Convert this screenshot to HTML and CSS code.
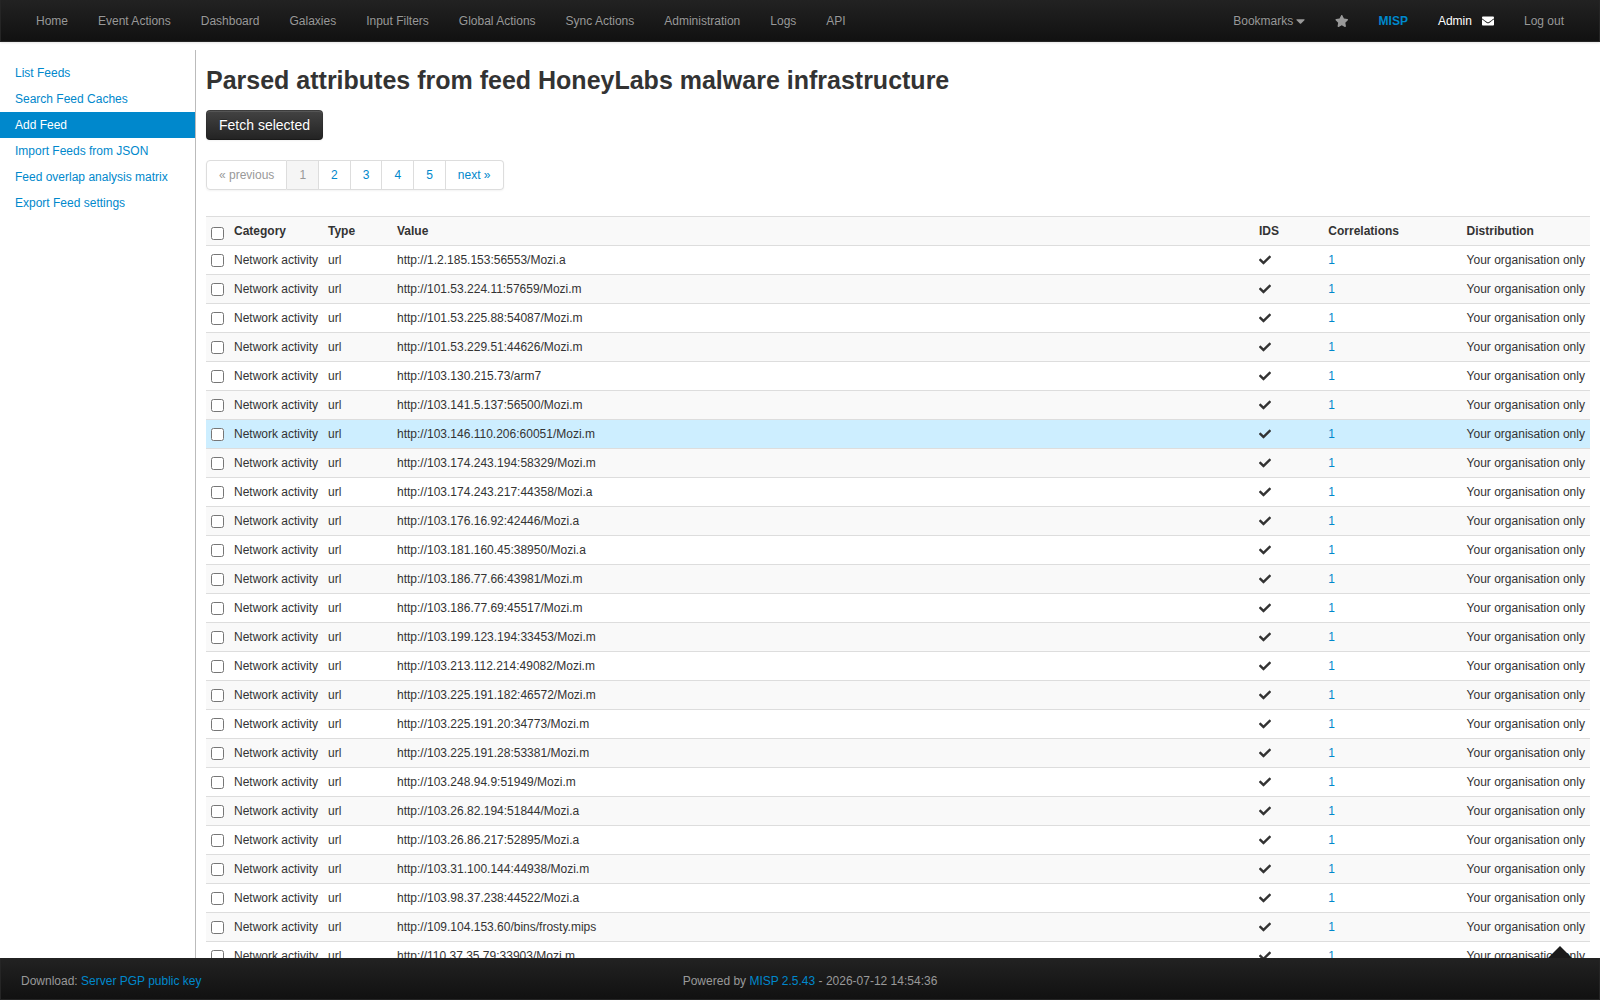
FILE: index.html
```
<!DOCTYPE html>
<html lang="en">
<head>
	<meta charset="UTF-8">
	<title>Feeds - MISP</title>
	<link rel="stylesheet" href="styles.css">
</head>
<body>
	<svg class="sprite">
		<symbol id="icon-star" viewBox="0 0 576 512"><path d="M259.3 17.8L194 150.2 47.9 171.5c-26.2 3.8-36.7 36.1-17.7 54.6l105.7 103-25 145.5c-4.5 26.3 23.2 46 46.4 33.7L288 439.6l130.7 68.7c23.2 12.2 50.9-7.4 46.4-33.7l-25-145.5 105.7-103c19-18.5 8.5-50.8-17.7-54.6L382 150.2 316.7 17.8c-11.7-23.6-45.6-23.9-57.4 0z"/></symbol>
		<symbol id="icon-envelope" viewBox="0 0 512 512"><path d="M502.3 190.8c3.9-3.1 9.7-.2 9.7 4.7V400c0 26.5-21.5 48-48 48H48c-26.5 0-48-21.5-48-48V195.6c0-5 5.7-7.8 9.7-4.7 22.4 17.4 52.1 39.5 154.1 113.6 21.1 15.4 56.7 47.8 92.2 47.6 35.7.3 72-32.8 92.3-47.6 102-74.1 131.6-96.3 154-113.7zM256 320c23.2.4 56.6-29.2 73.4-41.4 132.7-96.3 142.8-104.7 173.4-128.7 5.8-4.5 9.2-11.5 9.2-18.9v-19c0-26.5-21.5-48-48-48H48c-26.5 0-48 21.5-48 48v19c0 7.4 3.4 14.3 9.2 18.9 30.6 23.9 40.7 32.4 173.4 128.7 16.8 12.2 50.2 41.8 73.4 41.4z"/></symbol>
		<symbol id="icon-caret" viewBox="0 0 320 512"><path d="M31.3 192h257.3c17.8 0 26.7 21.5 14.1 34.1L174.1 354.8c-7.8 7.8-20.5 7.8-28.3 0L17.2 226.1C4.6 213.5 13.5 192 31.3 192z"/></symbol>
		<symbol id="icon-check" viewBox="0 0 512 512"><path d="M173.898 439.404l-166.4-166.4c-9.997-9.997-9.997-26.206 0-36.204l36.203-36.204c9.997-9.998 26.207-9.998 36.204 0L192 312.69 432.095 72.596c9.997-9.997 26.207-9.997 36.204 0l36.203 36.204c9.997 9.997 9.997 26.206 0 36.204l-294.4 294.401c-9.998 9.997-26.207 9.997-36.204-.001z"/></symbol>
	</svg>

	<div class="navbar">
		<ul class="nav">
			<li><a href="#">Home</a></li>
			<li><a href="#">Event Actions</a></li>
			<li><a href="#">Dashboard</a></li>
			<li><a href="#">Galaxies</a></li>
			<li><a href="#">Input Filters</a></li>
			<li><a href="#">Global Actions</a></li>
			<li><a href="#">Sync Actions</a></li>
			<li><a href="#">Administration</a></li>
			<li><a href="#">Logs</a></li>
			<li><a href="#">API</a></li>
		</ul>
		<ul class="nav nav-right">
			<li><a href="#">Bookmarks <svg class="icon-caret"><use href="#icon-caret"/></svg></a></li>
			<li><a href="#"><svg class="icon-star"><use href="#icon-star"/></svg></a></li>
			<li><a href="#" class="logo">MISP</a></li>
			<li><a href="#" class="user">Admin<svg class="icon-envelope"><use href="#icon-envelope"/></svg></a></li>
			<li><a href="#">Log out</a></li>
		</ul>
	</div>

	<div class="main">
		<ul class="side-menu">
			<li><a href="#">List Feeds</a></li>
			<li><a href="#">Search Feed Caches</a></li>
			<li class="active"><a href="#">Add Feed</a></li>
			<li><a href="#">Import Feeds from JSON</a></li>
			<li><a href="#">Feed overlap analysis matrix</a></li>
			<li><a href="#">Export Feed settings</a></li>
		</ul>
		<div class="content">
			<h2>Parsed attributes from feed HoneyLabs malware infrastructure</h2>
			<button class="btn" type="button">Fetch selected</button>
			<ul class="pagination">
				<li class="disabled"><span>« previous</span></li>
				<li class="current"><span>1</span></li>
				<li><a href="#">2</a></li>
				<li><a href="#">3</a></li>
				<li><a href="#">4</a></li>
				<li><a href="#">5</a></li>
				<li><a href="#">next »</a></li>
			</ul>
			<table class="table">
				<thead>
					<tr>
						<th class="col-select"><input type="checkbox" id="select_all"></th>
						<th class="col-category">Category</th>
						<th class="col-type">Type</th>
						<th class="col-value">Value</th>
						<th class="col-ids">IDS</th>
						<th class="col-correlations">Correlations</th>
						<th class="col-distribution">Distribution</th>
					</tr>
				</thead>
				<tbody id="attributes"></tbody>
			</table>
		</div>
	</div>

	<div class="footer">
		<div class="footer-left">Download: <a href="#">Server PGP public key</a></div>
		<div class="footer-center">Powered by <a href="#">MISP 2.5.43</a> - 2026-07-12 14:54:36</div>
		<div class="footer-right"></div>
		<div class="to-top"></div>
	</div>

	<script src="feed.js"></script>
</body>
</html>
```

FILE: styles.css
```
* {
	box-sizing: border-box;
}
html, body {
	height: 100%;
}
body {
	display: flex;
	flex-direction: column;
	margin: 0;
	overflow: hidden;
	background-color: #fff;
	color: #333;
	font-family: "Liberation Sans", Arial, sans-serif;
	font-size: 12px;
	line-height: 20px;
}
a {
	color: #0088cc;
	text-decoration: none;
}
ul {
	margin: 0;
	padding: 0;
	list-style: none;
}
svg {
	fill: currentColor;
}
.sprite {
	display: none;
}

/* top bar */
.navbar {
	display: flex;
	flex: none;
	justify-content: space-between;
	height: 42px;
	padding: 0 20px;
	border: 1px solid #252525;
	border-top: 0;
	background-image: linear-gradient(to bottom, #222, #111);
	box-shadow: 0 1px 2px rgba(0, 0, 0, .1);
}
.nav {
	display: flex;
}
.nav a {
	display: flex;
	align-items: center;
	height: 20px;
	margin-top: 11px;
	padding: 0 15px;
	color: #999;
	text-shadow: 0 -1px 0 rgba(0, 0, 0, .25);
	white-space: pre;
}
.nav a.logo {
	color: #0088cc;
	font-weight: bold;
}
.nav a.user {
	color: #fff;
}
.icon-caret {
	width: 9px;
	height: 14px;
	margin: 0 -.5px;
}
.icon-star {
	width: 13.5px;
	height: 12px;
	margin-right: .5px;
}
.icon-envelope {
	width: 12px;
	height: 12px;
	margin-left: 10px;
}

.main {
	display: flex;
	flex: 1;
	min-height: 0;
}
.side-menu {
	flex: none;
	width: 196px;
	margin-top: 8px;
	padding-top: 10px;
	border-right: 1px solid #bbb;
}
.side-menu a {
	display: block;
	padding: 3px 15px;
}
.side-menu .active a {
	background-color: #0088cc;
	color: #fff;
}

.content {
	flex: 1;
	padding: 18px 10px 0;
	overflow: hidden;
}
h2 {
	margin: 0 0 10px;
	font-size: 25px;
	line-height: 40px;
}
.btn {
	display: block;
	height: 30px;
	padding: 0 12px;
	border: 1px solid #222;
	border-color: rgba(0, 0, 0, .1) rgba(0, 0, 0, .1) rgba(0, 0, 0, .25);
	border-radius: 4px;
	background: linear-gradient(to bottom, #444, #222) border-box;
	box-shadow: inset 0 1px 0 rgba(255, 255, 255, .1), 0 1px 2px rgba(0, 0, 0, .05);
	color: #fff;
	font: 14px/20px "Liberation Sans", Arial, sans-serif;
	text-shadow: 0 -1px 0 rgba(0, 0, 0, .25);
}

.pagination {
	display: inline-flex;
	margin: 20px 0;
	border-radius: 4px;
	box-shadow: 0 1px 2px rgba(0, 0, 0, .05);
	vertical-align: top;
}
.pagination a,
.pagination span {
	display: block;
	padding: 4px 12px;
	border: 1px solid #ddd;
	border-left-width: 0;
}
.pagination li:first-child span {
	border-left-width: 1px;
	border-radius: 4px 0 0 4px;
}
.pagination li:last-child a {
	border-radius: 0 4px 4px 0;
}
.pagination span {
	color: #999;
}
.pagination .current span {
	background-color: #f5f5f5;
}

.table {
	width: 100%;
	margin-top: 6px;
	border-collapse: separate;
	border-spacing: 0;
	table-layout: fixed;
}
.table th,
.table td {
	height: 29px;
	padding: 4px 5px;
	border-top: 1px solid #ddd;
	text-align: left;
	vertical-align: top;
	white-space: nowrap;
}
.table thead th,
.table tbody tr:nth-child(even) td {
	background-color: #f9f9f9;
}
.table tbody tr.highlight td {
	background-color: #cdeeff;
}
.table input {
	display: block;
	width: 13px;
	height: 13px;
	margin: 4px 0 0;
}
.table th input {
	margin-top: 6px;
}
.table svg {
	display: block;
	width: 12px;
	height: 12px;
	margin-top: 4px;
}
.col-select { width: 23px; }
.col-category { width: 94px; }
.col-type { width: 69px; }
.col-ids { width: 69.3px; }
.col-correlations { width: 138.3px; }
.col-distribution { width: 128.4px; }

/* bottom bar */
.footer {
	position: relative;
	display: grid;
	flex: none;
	grid-template-columns: 1fr auto 1fr;
	height: 42px;
	padding: 13px 0 0 20px;
	border: 1px solid #252525;
	border-top: 0;
	background-image: linear-gradient(to bottom, #222, #111);
	color: #999;
}
.to-top {
	position: absolute;
	top: -12px;
	right: 27px;
	border: 12px solid transparent;
	border-top: 0;
	border-bottom-color: #1b1b1b;
}
```

FILE: feed.js
```
const values = [
	'http://1.2.185.153:56553/Mozi.a',
	'http://101.53.224.11:57659/Mozi.m',
	'http://101.53.225.88:54087/Mozi.m',
	'http://101.53.229.51:44626/Mozi.m',
	'http://103.130.215.73/arm7',
	'http://103.141.5.137:56500/Mozi.m',
	'http://103.146.110.206:60051/Mozi.m',
	'http://103.174.243.194:58329/Mozi.m',
	'http://103.174.243.217:44358/Mozi.a',
	'http://103.176.16.92:42446/Mozi.a',
	'http://103.181.160.45:38950/Mozi.a',
	'http://103.186.77.66:43981/Mozi.m',
	'http://103.186.77.69:45517/Mozi.m',
	'http://103.199.123.194:33453/Mozi.m',
	'http://103.213.112.214:49082/Mozi.m',
	'http://103.225.191.182:46572/Mozi.m',
	'http://103.225.191.20:34773/Mozi.m',
	'http://103.225.191.28:53381/Mozi.m',
	'http://103.248.94.9:51949/Mozi.m',
	'http://103.26.82.194:51844/Mozi.a',
	'http://103.26.86.217:52895/Mozi.a',
	'http://103.31.100.144:44938/Mozi.m',
	'http://103.98.37.238:44522/Mozi.a',
	'http://109.104.153.60/bins/frosty.mips',
	'http://110.37.35.79:33903/Mozi.m'
];
const highlighted = 6;

document.getElementById('attributes').innerHTML = values.map((value, i) => `
	<tr class="${i === highlighted ? 'highlight' : ''}">
		<td><input type="checkbox"></td>
		<td>Network activity</td>
		<td>url</td>
		<td>${value}</td>
		<td><svg><use href="#icon-check"/></svg></td>
		<td><a href="#">1</a></td>
		<td>Your organisation only</td>
	</tr>`).join('');
```
